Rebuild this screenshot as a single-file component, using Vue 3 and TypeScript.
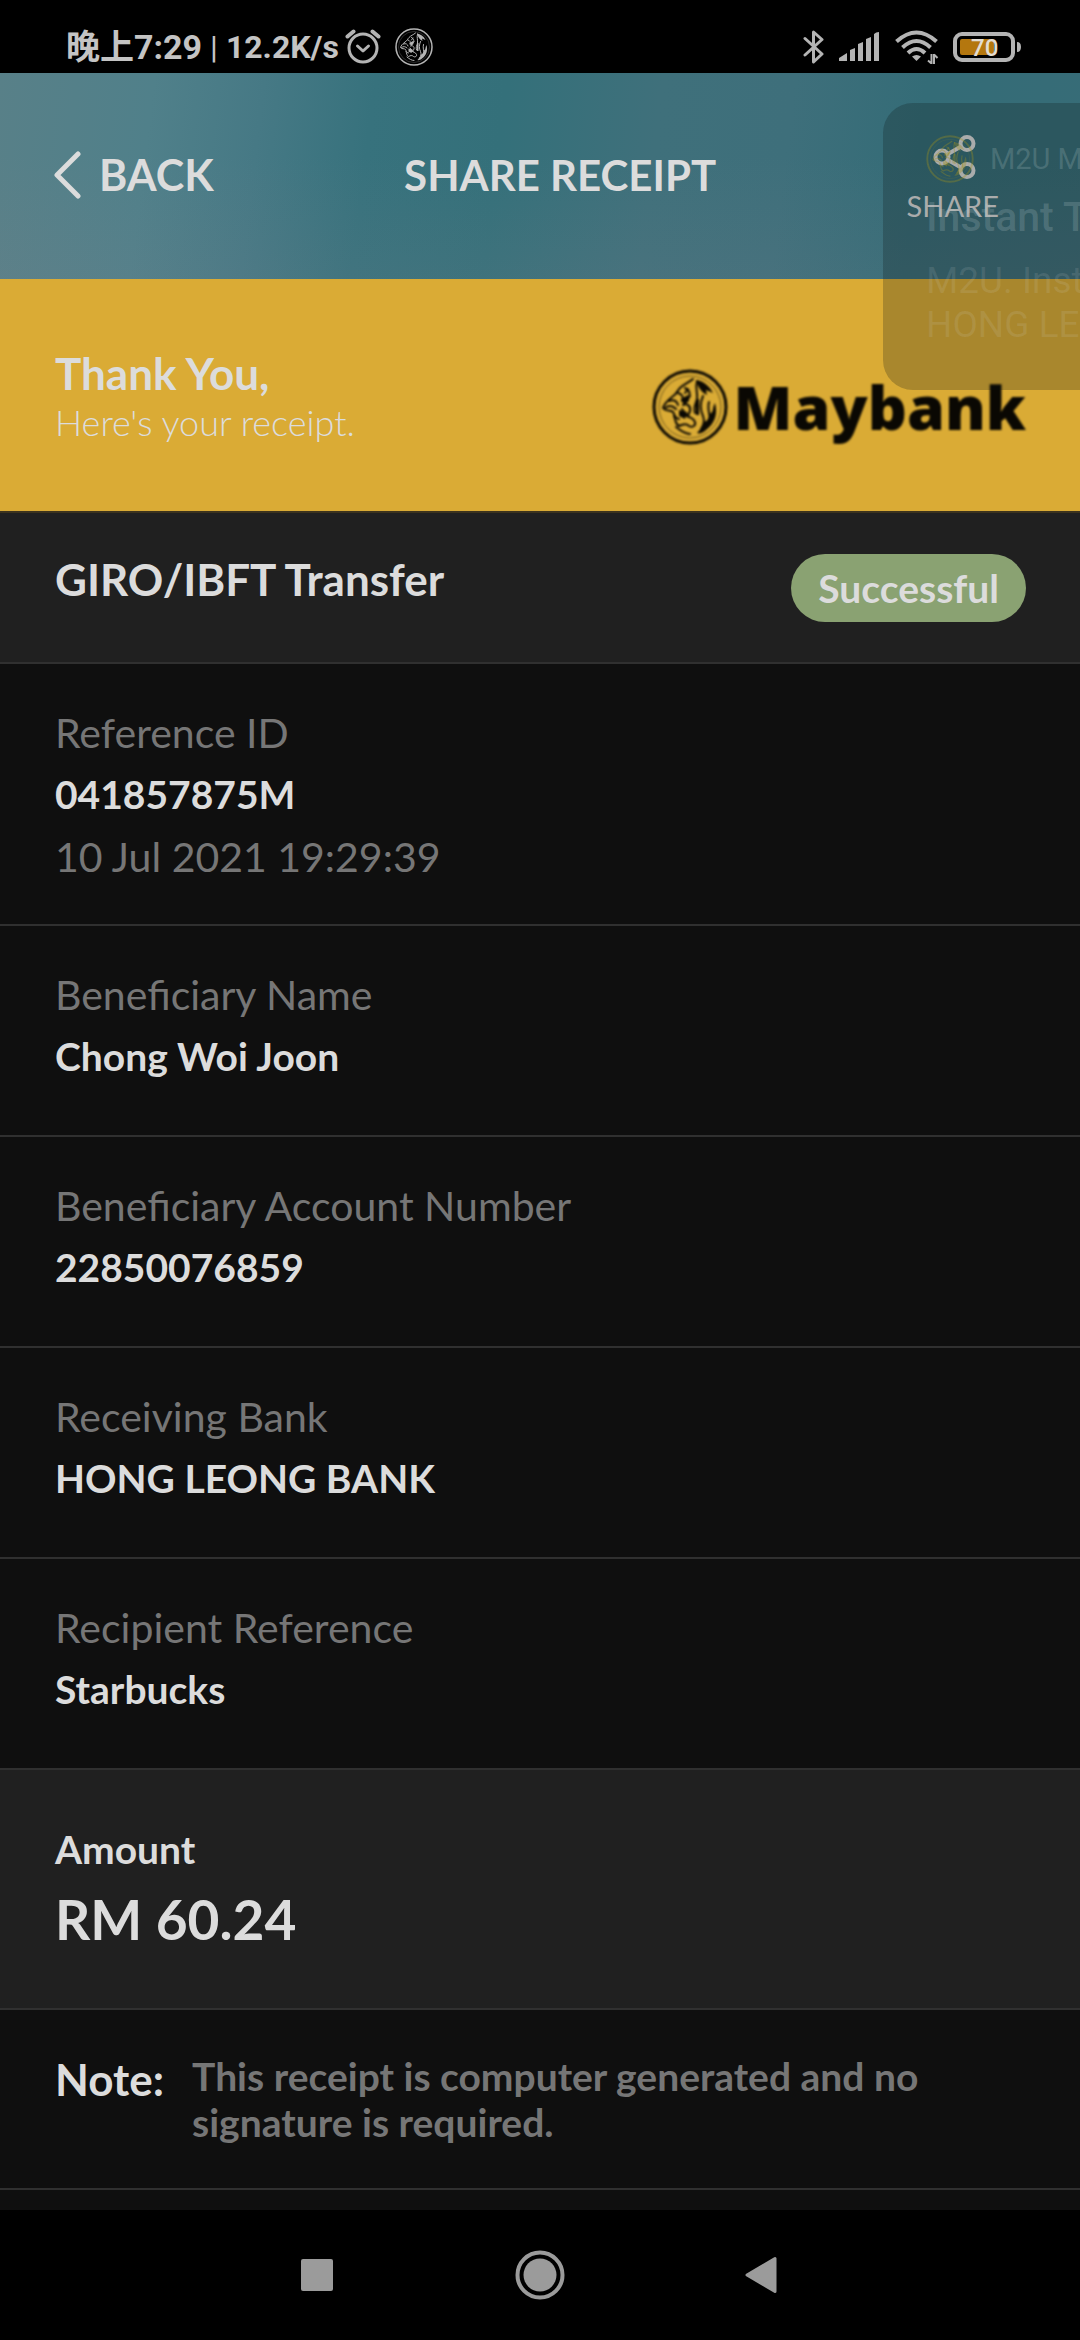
<script setup lang="ts">
interface Field {
  label: string
  value: string
  extra?: string
}

const fields: Field[] = [
  { label: 'Reference ID', value: '041857875M', extra: '10 Jul 2021 19:29:39' },
  { label: 'Beneficiary Name', value: 'Chong Woi Joon' },
  { label: 'Beneficiary Account Number', value: '22850076859' },
  { label: 'Receiving Bank', value: 'HONG LEONG BANK' },
  { label: 'Recipient Reference', value: 'Starbucks' },
]
</script>

<template>
  <div class="screen">
    <!-- tiger emblem shared by the status bar, the logo and the notification -->
    <svg class="defs" aria-hidden="true">
      <symbol id="tiger" viewBox="0 0 76 76">
        <circle cx="38" cy="38" r="36" fill="none" stroke="currentColor" stroke-width="3" />
        <circle cx="38" cy="38" r="31" fill="none" stroke="currentColor" stroke-width="1" opacity=".5" />
        <g fill="none" stroke="currentColor" stroke-width="2" stroke-linecap="round" stroke-linejoin="round">
          <path d="M41 10c-5 4-9 5-13 9-3 3-3 6-8 9-5 4-8 7-9 11 3 4 7 1 10 4 2 3 1 6 6 7" />
          <path d="M26 24c4 1 6 4 4 8m3-13c5 2 6 7 3 11m-19 2c5-2 8 0 9 4m-13 3c4-3 8-2 11 1" />
          <path d="M31 36c4-2 8 1 7 6s-6 6-9 4m1-6l6 8m-14-1c2 4 1 8 5 10 4-2 7-3 10 0 3 2 7 0 6-4-2-5-7-4-9-8" />
          <path d="M45 12c-2 7 1 12 0 18-1 5-4 8-2 14m8-17c-3 7-3 14 0 20 2 5 1 9-2 13m8-27c-2 7 1 12 1 18M24 58c5 4 9 7 14 7m-2-45l-3 4m5 3l-4 5" />
        </g>
        <g fill="currentColor">
          <path d="M44 11c7 1 13 5 17 13l-7-3 1 5c-6-3-9-8-11-15z" />
          <path d="M63 34c3 11 0 20-9 27-3 3-7 4-9 3l5-6c2-1 1-5 4-6s2-6 5-8 1-5 4-10z" />
          <path d="M29 30l7-4 1 6-5 4zM27 41l8 2-2 7-6-3zM44 30h3v16h-3z" />
        </g>
      </symbol>
    </svg>

    <div class="status">
      <div class="status-side">
        <span class="clock">晚上7:29</span>
        <span class="speed"><span class="bar">|</span> 12.2K/s</span>
        <svg class="alarm" width="36" height="36" viewBox="0 0 36 36" fill="none" stroke="currentColor" stroke-width="3" stroke-linecap="round">
          <circle cx="18" cy="19" r="14" />
          <path d="M2.500 7.500l6-5M33.500 7.500l-6-5" stroke-width="4" />
          <path d="M12.500 17l5.500 5 5.500-5" stroke-linejoin="round" />
        </svg>
        <svg class="mini-tiger" width="38" height="38"><use href="#tiger" /></svg>
      </div>
      <div class="status-side icons">
        <svg width="22" height="36" viewBox="0 0 22 36" fill="none" stroke="currentColor" stroke-width="3" stroke-linecap="round" stroke-linejoin="round">
          <path d="M2 9.500l17 15.500-8.500 8V3L19 10.500 2 26" />
        </svg>
        <svg class="signal" width="42" height="30" viewBox="0 0 42 30" fill="currentColor">
          <path d="M0 29v-3l8-5v8zM11 29V18l5-2v13zM19 29V12l5-2v19zM27 29V7l5-2v24zM35 29V2q2-2 5-2v29z" />
        </svg>
        <svg class="wifi" width="44" height="34" viewBox="0 0 44 34" fill="none" stroke="currentColor" stroke-width="4">
          <path d="M1.500 11.500Q21.500-6.500 41.500 11.500M7.500 17.500Q21.500 4.500 35.500 17.500M13 23Q21.500 15 30 23" />
          <path d="M17 26.500q4.500-3 9 0l-4.500 4.500z" fill="currentColor" stroke="none" />
          <path d="M36.500 24v10M33 30.500l3.500 3M39 34V24m0 .5l3.500 3.500" stroke-width="2" />
        </svg>
        <svg class="battery" width="70" height="30" viewBox="0 0 70 30">
          <rect x="2" y="2" width="58" height="26" rx="7" fill="none" stroke="currentColor" stroke-width="4" />
          <rect x="7" y="7" width="34" height="16" rx="2" fill="#b4770f" />
          <path d="M64 10q4 0 4 5t-4 5z" fill="currentColor" />
          <text x="18" y="24" class="level">70</text>
        </svg>
      </div>
    </div>

    <header class="header">
      <button class="back" type="button">
        <svg width="28" height="48" viewBox="0 0 28 48" fill="none" stroke="currentColor" stroke-width="5" stroke-linecap="round" stroke-linejoin="round">
          <path d="M24 3L3 24l21 21" />
        </svg>
        <span>BACK</span>
      </button>
      <h1>SHARE RECEIPT</h1>
      <button class="share" type="button">
        <svg width="46" height="46" viewBox="0 0 46 46" fill="none" stroke="currentColor" stroke-width="4">
          <circle cx="12" cy="24" r="6.500" />
          <circle cx="37" cy="10.500" r="6.500" />
          <circle cx="37" cy="37.500" r="6.500" />
          <path d="M18 21l13-7.500M18 27l13 7.500" />
        </svg>
        <span>SHARE</span>
      </button>
    </header>

    <section class="thanks">
      <div>
        <h2>Thank You,</h2>
        <p>Here's your receipt.</p>
      </div>
      <div class="logo">
        <svg width="76" height="76"><use href="#tiger" /></svg>
        <span>Maybank</span>
      </div>
    </section>

    <main>
      <section class="kind">
        <h2>GIRO/IBFT Transfer</h2>
        <span class="pill">Successful</span>
      </section>

      <dl class="fields">
        <div v-for="f in fields" :key="f.label" class="field">
          <dt>{{ f.label }}</dt>
          <dd class="value">{{ f.value }}</dd>
          <dd v-if="f.extra" class="extra">{{ f.extra }}</dd>
        </div>
      </dl>

      <section class="amount">
        <h3>Amount</h3>
        <p>RM 60.24</p>
      </section>

      <section class="note">
        <h3>Note:</h3>
        <p>This receipt is computer generated and no signature is required.</p>
      </section>
    </main>

    <nav class="nav">
      <button type="button" aria-label="Recent apps">
        <svg width="50" height="50" viewBox="0 0 50 50"><rect x="8" y="9" width="32" height="32" rx="2" fill="currentColor" /></svg>
      </button>
      <button type="button" aria-label="Home">
        <svg width="50" height="50" viewBox="0 0 50 50">
          <circle cx="25" cy="25" r="22.500" fill="none" stroke="currentColor" stroke-width="4" />
          <circle cx="25" cy="25" r="16.500" fill="currentColor" />
        </svg>
      </button>
      <button type="button" aria-label="Back">
        <svg width="50" height="50" viewBox="0 0 50 50"><path d="M10 25L38 8.500v33z" fill="currentColor" stroke="currentColor" stroke-width="3" stroke-linejoin="round" /></svg>
      </button>
    </nav>

    <!-- notification fading out over the top right corner -->
    <aside class="toast">
      <div class="toast-app">
        <svg width="48" height="48"><use href="#tiger" /></svg>
        <span>M2U MY</span>
      </div>
      <strong>Instant T</strong>
      <p>M2U. Inst<br />HONG LE</p>
    </aside>
  </div>
</template>

<style>
body {
  margin: 0;
  background: #000;
}
</style>

<style scoped>
.screen {
  position: relative;
  display: flex;
  flex-direction: column;
  min-height: 100vh;
  overflow: hidden;
  background: #0f0f0f;
  color: #dcdcdc;
  font-family: Lato, "Noto Sans CJK SC", sans-serif;
}
h1, h2, h3, p, dl, dd {
  margin: 0;
}
button {
  padding: 0;
  border: 0;
  background: none;
  color: inherit;
  font: inherit;
}
svg {
  display: block;
  flex: none;
}
.defs {
  position: absolute;
  width: 0;
  height: 0;
}

.status {
  display: flex;
  justify-content: space-between;
  height: 73px;
  padding: 0 57px 0 66px;
  box-sizing: border-box;
  background: #000;
  color: #b4b4b4;
}
.status-side {
  display: flex;
  align-items: center;
  padding-top: 20px;
  white-space: nowrap;
}
.clock, .speed {
  color: #c4c4c4;
  font: 700 34px/40px Roboto, "Noto Sans CJK SC", sans-serif;
}
.speed {
  margin-left: 8px;
  font-size: 32px;
}
.bar {
  font-weight: 400;
}
.alarm {
  margin-left: 6px;
}
.mini-tiger, .signal, .wifi, .battery {
  margin-left: 14px;
}
.level {
  fill: #e2ddd3;
  font: 500 24px Roboto, sans-serif;
}

.header {
  display: flex;
  align-items: center;
  justify-content: space-between;
  height: 206px;
  padding: 0 81px 2px 54px;
  box-sizing: border-box;
  background:
    linear-gradient(180deg, rgba(255, 255, 255, 0) 40%, rgba(130, 130, 140, 0.14)),
    linear-gradient(97deg, #588088 0%, #50808a 14%, #467985 24%, #37727d 34%, #34707a 46%, #3f707b 60%, #3e6f7b 72%, #346c77 84%, #376c77 100%);
}
.back {
  display: flex;
  align-items: center;
  gap: 17px;
  font-weight: 700;
  font-size: 43px;
  line-height: 52px;
}
.header h1 {
  font-weight: 700;
  font-size: 42px;
  line-height: 52px;
}
.share {
  display: flex;
  flex-direction: column;
  align-items: center;
  gap: 10px;
  padding-top: 6px;
  font-size: 29px;
  line-height: 34px;
}

.thanks {
  display: flex;
  align-items: flex-end;
  justify-content: space-between;
  padding: 68px 54px 66px 55px;
  background: #daab35;
}
.thanks h2 {
  font-weight: 700;
  font-size: 44px;
  line-height: 52px;
}
.thanks p {
  font-weight: 300;
  font-size: 36px;
  line-height: 46px;
}
.logo {
  display: flex;
  align-items: center;
  gap: 6px;
  color: #0a0803;
  filter: blur(1px);
}
.logo span {
  font: 800 61px/60px "Open Sans", sans-serif;
}

main {
  flex: 1;
}
.kind {
  display: flex;
  align-items: flex-start;
  justify-content: space-between;
  padding: 41px 54px 40px 55px;
  border-top: 2px solid #3c331e;
  border-bottom: 2px solid #303030;
  background: #202020;
}
.kind h2 {
  font-weight: 700;
  font-size: 44px;
  line-height: 50px;
}
.pill {
  padding: 0 27px;
  border-radius: 34px;
  background: #8aa272;
  font-weight: 700;
  font-size: 39px;
  line-height: 68px;
}

.field {
  display: flex;
  flex-direction: column;
  gap: 12px;
  padding: 44px 55px 55px;
  border-bottom: 2px solid #303030;
}
.field:first-child {
  padding-bottom: 42px;
}
dt, .extra {
  color: #767676;
  font-size: 41px;
  line-height: 50px;
}
.extra {
  margin-top: 2px;
}
.value {
  font-weight: 700;
  font-size: 39px;
  line-height: 48px;
}

.amount {
  padding: 55px;
  border-bottom: 2px solid #303030;
  background: #202020;
}
.amount h3 {
  margin-bottom: 12px;
  font-weight: 700;
  font-size: 39px;
  line-height: 48px;
}
.amount p {
  font-weight: 700;
  font-size: 55px;
  line-height: 68px;
}
.note {
  display: flex;
  align-items: flex-start;
  gap: 28px;
  padding: 43px 55px;
  border-bottom: 2px solid #303030;
}
.note h3 {
  font-weight: 700;
  font-size: 44px;
  line-height: 52px;
}
.note p {
  color: #767676;
  font-weight: 700;
  font-size: 39px;
  line-height: 46px;
}

.nav {
  display: flex;
  justify-content: center;
  gap: 172px;
  padding: 40px 0;
  background: #000;
  color: #9b9b9b;
}

.toast {
  position: absolute;
  top: 103px;
  right: 0;
  width: 197px;
  height: 287px;
  padding: 32px 0 0 43px;
  box-sizing: border-box;
  overflow: hidden;
  border-radius: 30px 0 0 30px;
  background: rgba(14, 22, 20, 0.24);
  color: rgba(200, 215, 215, 0.2);
  font-family: Roboto, sans-serif;
  white-space: nowrap;
}
.toast-app {
  display: flex;
  align-items: center;
  gap: 16px;
  height: 48px;
  font-size: 29px;
}
.toast-app svg {
  color: rgba(160, 145, 30, 0.35);
}
.toast strong {
  display: block;
  margin-top: 10px;
  font-weight: 500;
  font-size: 41px;
  line-height: 48px;
}
.toast p {
  margin-top: 18px;
  color: rgba(215, 215, 215, 0.13);
  font-size: 37px;
  line-height: 44px;
}
</style>
